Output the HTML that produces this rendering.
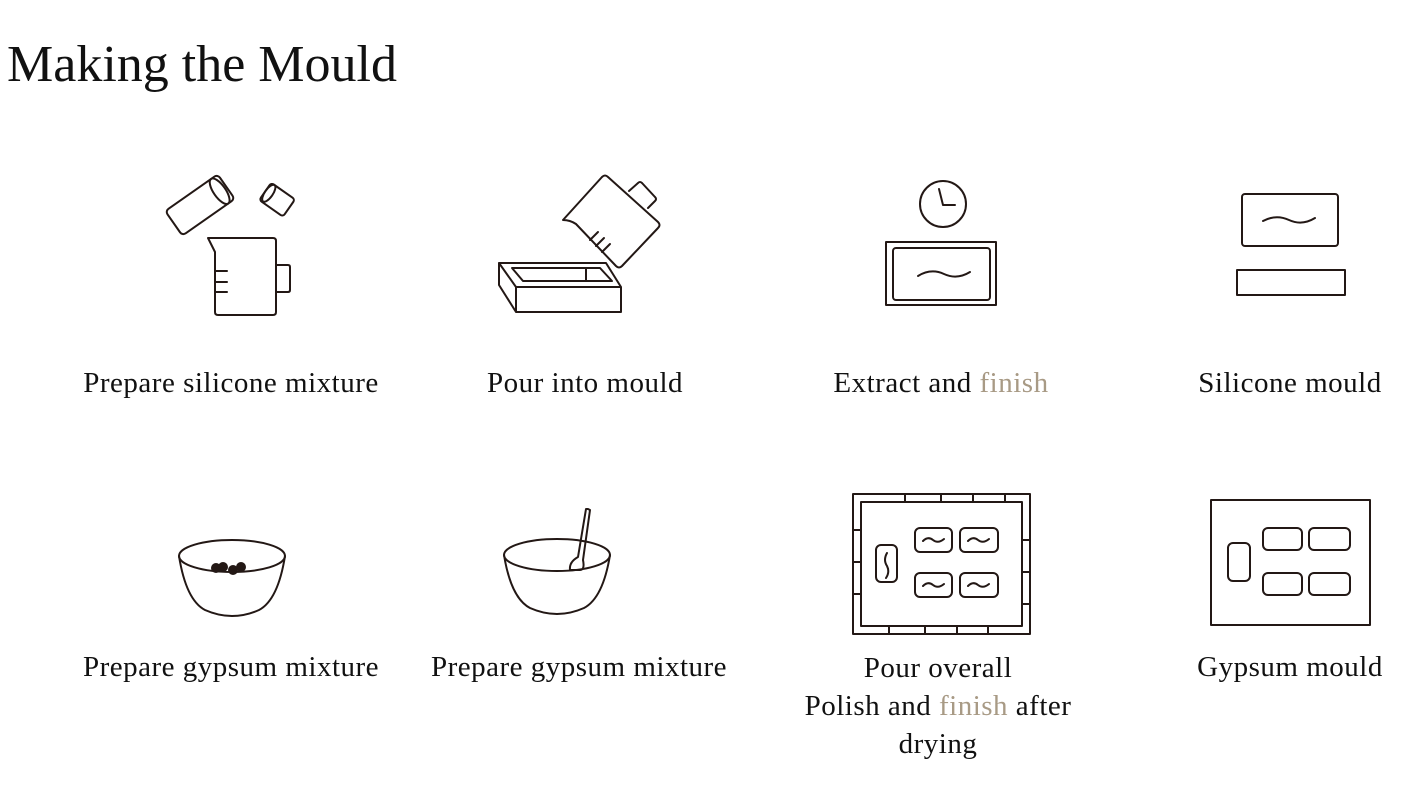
<!DOCTYPE html>
<html><head><meta charset="utf-8"><style>
html,body{margin:0;padding:0;background:#fff;width:1425px;height:802px;overflow:hidden;position:relative}
.t{position:absolute;font-family:"Liberation Serif",serif;color:#111;white-space:nowrap}
h1{position:absolute;left:7px;top:35px;margin:0;font-weight:normal;font-family:"Liberation Serif",serif;font-size:52px;color:#111}
.l{font-size:29px;letter-spacing:0.5px;transform:translateX(-50%);text-align:center}
.g{color:#a89a85}
svg{position:absolute;left:0;top:0}
</style></head><body>
<h1>Making the Mould</h1>
<svg width="1425" height="802" fill="none" stroke="#231815" stroke-width="2" stroke-linejoin="round" stroke-linecap="round">
<g transform="rotate(-35 200 205)"><rect x="168" y="190" width="64" height="30" rx="4"/><ellipse cx="224" cy="205" rx="6" ry="15"/></g>
<g transform="rotate(35 277 199)"><rect x="263" y="189" width="29" height="21" rx="3"/><ellipse cx="267" cy="199" rx="4" ry="10"/></g>
<path d="M208 238 L273 238 Q276 238 276 241 L276 312 Q276 315 273 315 L218 315 Q215 315 215 312 L215 252 Z"/>
<path d="M276 265 L288 265 Q290 265 290 267 L290 290 Q290 292 288 292 L276 292"/>
<path d="M215 271 H227 M215 282 H227 M215 292 H227"/>
<path d="M499 263 L606 263 L621 287 L516 287 Z M516 287 V312 H621 V287 M499 263 V285 L516 312"/>
<path d="M512 268 L600 268 L612 281 L523 281 Z M586 268 V281"/>
<path d="M563 220 L602 177 Q605 174 608 177 L658 222 Q661 225 658 228 L622 266 Q619 269 616 266 L576 224 Q570 220 563 220 Z"/>
<path d="M629 191 L638 183 Q640 181 642 183 L655 197 Q657 199 655 201 L648 208"/>
<path d="M590 240 L598 232 M596 246 L604 238 M602 252 L610 244"/>
<circle cx="943" cy="204" r="23"/><path d="M939 189 L943 205 L955 205"/>
<rect x="886" y="242" width="110" height="63"/><rect x="893" y="248" width="97" height="52" rx="3"/>
<path d="M918 276 Q931 268 944 274 Q957 280 970 272"/>
<rect x="1242" y="194" width="96" height="52" rx="3"/>
<path d="M1263 221 Q1276 214 1289 220 Q1302 226 1315 218"/>
<rect x="1237" y="270" width="108" height="25"/>
<ellipse cx="232" cy="556" rx="53" ry="16"/>
<path d="M179 556 Q186 600 205 610 Q232 622 259 610 Q278 600 285 556"/>
<g fill="#231815" stroke="none"><circle cx="216" cy="568" r="5"/><circle cx="223" cy="567" r="5"/><circle cx="233" cy="570" r="5"/><circle cx="241" cy="567" r="5"/></g>
<ellipse cx="557" cy="555" rx="53" ry="16"/>
<path d="M504 555 Q511 598 530 608 Q557 620 584 608 Q603 598 610 555"/>
<path d="M588 509 L590 510 L583 560 Q585 570 580 570 L570 570 Q569 562 578 557 L586 509 Z"/>
<rect x="853" y="494" width="177" height="140"/><rect x="861" y="502" width="161" height="124"/>
<path d="M905 494V502 M941 494V502 M973 494V502 M1005 494V502 M889 626V634 M925 626V634 M957 626V634 M988 626V634 M853 530H861 M853 562H861 M853 594H861 M1022 540H1030 M1022 572H1030 M1022 604H1030"/>
<rect x="876" y="545" width="21" height="37" rx="5"/>
<rect x="915" y="528" width="37" height="24" rx="5"/><rect x="960" y="528" width="38" height="24" rx="5"/>
<rect x="915" y="573" width="37" height="24" rx="5"/><rect x="960" y="573" width="38" height="24" rx="5"/>
<path d="M923 541 Q928 536 933 540 Q938 544 944 539 M968 541 Q973 536 978 540 Q983 544 989 539 M923 586 Q928 581 933 585 Q938 589 944 584 M968 586 Q973 581 978 585 Q983 589 989 584 M887 553 Q883 560 887 566 Q890 572 886 578"/>
<rect x="1211" y="500" width="159" height="125"/>
<rect x="1228" y="543" width="22" height="38" rx="5"/>
<rect x="1263" y="528" width="39" height="22" rx="5"/><rect x="1309" y="528" width="41" height="22" rx="5"/>
<rect x="1263" y="573" width="39" height="22" rx="5"/><rect x="1309" y="573" width="41" height="22" rx="5"/>
</svg>
<div class="t l" style="left:231px;top:367px">Prepare silicone mixture</div>
<div class="t l" style="left:585px;top:367px">Pour into mould</div>
<div class="t l" style="left:941px;top:367px">Extract and <span class="g">finish</span></div>
<div class="t l" style="left:1290px;top:367px">Silicone mould</div>
<div class="t l" style="left:231px;top:651px">Prepare gypsum mixture</div>
<div class="t l" style="left:579px;top:651px">Prepare gypsum mixture</div>
<div class="t l" style="left:938px;top:649px;line-height:38px">Pour overall<br>Polish and <span class="g">finish</span> after<br>drying</div>
<div class="t l" style="left:1290px;top:651px">Gypsum mould</div>
</body></html>
